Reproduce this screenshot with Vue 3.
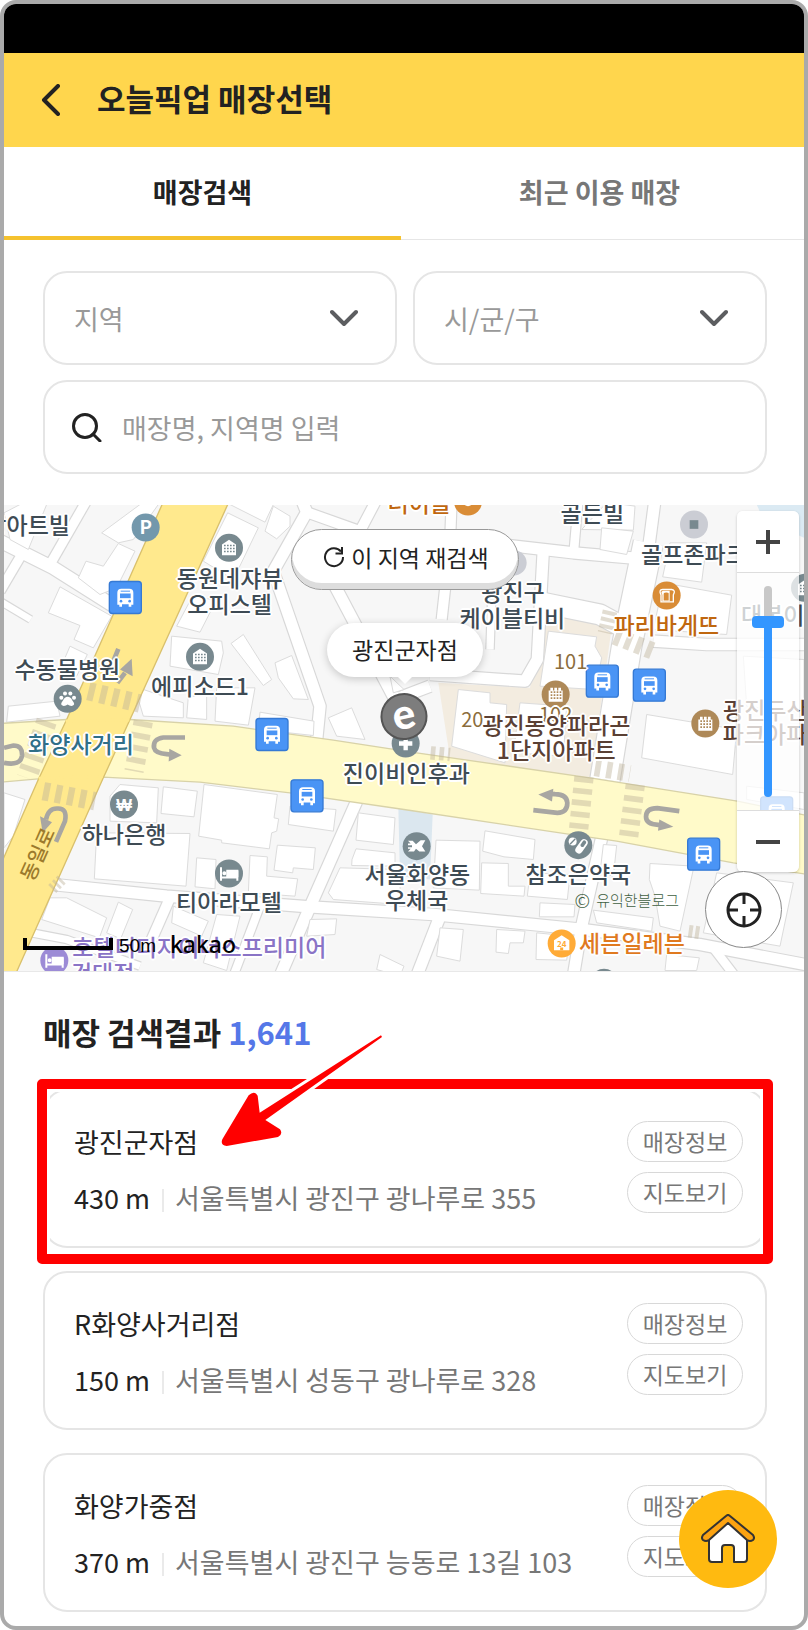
<template>
    <div class="phone">
        <div class="status-bar"></div>

        <header class="top-bar">
            <button type="button" class="back" aria-label="뒤로">
                <svg viewBox="0 0 20 32" width="20" height="32">
                    <path d="M17 2 L3 16 L17 30" />
                </svg>
            </button>
            <h1>오늘픽업 매장선택</h1>
        </header>

        <nav class="tabs">
            <button
                v-for="tab in tabs"
                :key="tab"
                type="button"
                :class="{ active: tab === activeTab }"
                @click="activeTab = tab"
            >
                {{ tab }}
            </button>
        </nav>

        <form class="filters" @submit.prevent>
            <div class="select-box">
                <select v-model="region" aria-label="지역">
                    <option value="">지역</option>
                    <option value="seoul">서울특별시</option>
                </select>
                <svg class="chevron" viewBox="0 0 28 18" width="28" height="18">
                    <path d="M2 3 L14 15 L26 3" />
                </svg>
            </div>
            <div class="select-box">
                <select v-model="district" aria-label="시/군/구">
                    <option value="">시/군/구</option>
                    <option value="gwangjin">광진구</option>
                    <option value="seongdong">성동구</option>
                </select>
                <svg class="chevron" viewBox="0 0 28 18" width="28" height="18">
                    <path d="M2 3 L14 15 L26 3" />
                </svg>
            </div>
            <div class="search-box">
                <svg viewBox="0 0 30 30" width="30" height="30">
                    <circle cx="13" cy="14" r="11.5" />
                    <path d="M21 22 L28 29" />
                </svg>
                <input
                    v-model="keyword"
                    type="text"
                    placeholder="매장명, 지역명 입력"
                    aria-label="매장명, 지역명 입력"
                />
            </div>
        </form>

        <section class="map">
            <svg class="map-base" viewBox="12 15 2400 1401" preserveAspectRatio="xMidYMid slice">
                <rect x="12" y="15" width="2400" height="1401" fill="#f7f7f7" />
                <polygon points="2270,15 2412,15 2412,115 2290,60" fill="#dbeaf3" />
                <polygon points="1625,335 1835,385 1770,850 1350,775 1315,550 1590,565" fill="#f3ece0" />
                <polygon points="1195,925 1298,945 1290,1140 1200,1130" fill="#dbe7ef" />

                <polyline v-for="r in roads" :key="'e' + r.p" :points="r.p" :stroke-width="r.w + 7" class="road-edge" />
                <polyline v-for="r in roads" :key="r.p" :points="r.p" :stroke-width="r.w" class="road" />
                <polygon v-for="b in buildings" :key="b" :points="b" class="building" />

                <!-- 광나루로 -->
                <path
                    class="avenue light"
                    d="M0 672 L200 660 L390 660 L700 680 L1000 722 L1250 760 L1770 835 L2212 905 L2430 950
                       L2430 1126 L2200 1090 L1850 1025 L1700 1003 L1212 930 L870 880 L600 848 L310 833 L115 838 L0 848 Z"
                />
                <!-- 동일로 -->
                <path class="avenue" d="M493 0 L690 0 L390 660 L310 835 L44 1430 L0 1430 L0 1100 L115 840 L200 660 Z" />
                <path d="M197 664 L388 662 M116 836 L309 831" stroke="#ffe98d" stroke-width="8" />

                <g class="crosswalk">
                    <path d="M265 575 L420 612" stroke-width="55" stroke-dasharray="19 18" />
                    <path d="M130 875 L285 905" stroke-width="55" stroke-dasharray="19 18" />
                    <path d="M430 665 L402 815" stroke-width="58" stroke-dasharray="17 20" />
                    <path d="M140 665 L80 835" stroke-width="62" stroke-dasharray="16 20" />
                    <path d="M1752 832 L1736 988" stroke-width="58" stroke-dasharray="17 18" />
                    <path d="M1906 855 L1886 1010" stroke-width="58" stroke-dasharray="17 18" />
                    <path d="M1785 805 L1890 822" stroke-width="50" stroke-dasharray="17 18" />
                    <path d="M1845 410 L1960 455" stroke-width="52" stroke-dasharray="18 16" />
                    <path d="M1292 760 L1350 765" stroke-width="40" stroke-dasharray="14 12" />
                    <path d="M2066 1295 L2100 1300" stroke-width="38" stroke-dasharray="12 8" />
                    <path d="M1830 335 L1815 400" stroke-width="44" stroke-dasharray="12 9" />
                    <path d="M185 1140 L155 1170" stroke-width="34" stroke-dasharray="8 8" />
                </g>

                <g class="turn">
                    <path d="M1600 932 L1672 940 Q1702 940 1702 910 Q1700 884 1665 884 L1650 883" />
                    <polygon points="1615,885 1660,868 1656,906" />
                    <path d="M2038 935 L1972 926 Q1938 926 1938 952 Q1938 975 1975 976 L1980 977" />
                    <polygon points="2020,982 1978,960 1974,994" />
                    <path d="M555 714 L490 714 Q458 718 462 745 Q466 762 500 764 L510 765" />
                    <polygon points="545,767 508,748 506,786" />
                    <path d="M12 790 Q62 800 66 768 Q68 738 40 738 L12 745" />
                    <path d="M168 1027 L195 965 Q203 925 172 927 Q145 926 138 960" />
                    <polygon points="128,1000 120,950 156,968" />
                    <path d="M355 448 L340 485 M352 550 L375 520" />
                    <polygon points="395,478 398,530 360,510" />
                </g>

                <g v-for="b in busStops" :key="b.join()" :transform="`translate(${b[0]} ${b[1]})`">
                    <rect x="-48" y="-48" width="96" height="96" rx="9" fill="#4a94f5" stroke="#3579d4" stroke-width="4" />
                    <path
                        d="M-24 22 V-14 Q-24 -26 -12 -26 H12 Q24 -26 24 -14 V22 H18 V28 H10 V20 H-10 V28 H-18 V22 Z"
                        fill="#fff"
                    />
                    <rect x="-16" y="-12" width="32" height="14" fill="#4a94f5" />
                    <circle cx="-13" cy="11" r="4" fill="#4a94f5" />
                    <circle cx="13" cy="11" r="4" fill="#4a94f5" />
                    <path d="M-14 -19 H14" stroke="#4a94f5" stroke-width="3" />
                </g>

                <g v-for="p in pins" :key="p.x + '-' + p.y" :transform="`translate(${p.x} ${p.y})`">
                    <circle :r="p.r || 42" :fill="p.color" />
                    <g v-if="p.icon === 'building' || p.icon === 'apart'">
                        <path v-if="p.icon === 'building'" d="M-21 22 V-10 L0 -24 L21 -10 V22 Z" fill="#fff" />
                        <path v-else d="M-21 22 V-12 H-16 V-20 H-8 V-12 H-4 V-20 H4 V-12 H8 V-20 H16 V-12 H21 V22 Z" fill="#fff" />
                        <path
                            d="M-15 -7 H17 M-15 2 H17 M-15 11 H17"
                            :stroke="p.color"
                            stroke-width="5"
                            stroke-dasharray="5 4"
                        />
                    </g>
                    <g v-else-if="p.icon === 'paw'" fill="#fff">
                        <path d="M0 -6 Q9 -6 14 5 Q25 18 14 21 Q6 22 0 17 Q-6 22 -14 21 Q-25 18 -14 5 Q-9 -6 0 -6 Z" />
                        <circle cx="-19" cy="-3" r="6" />
                        <circle cx="-8" cy="-16" r="6" />
                        <circle cx="8" cy="-16" r="6" />
                        <circle cx="19" cy="-3" r="6" />
                    </g>
                    <g v-else-if="p.icon === 'bed'" fill="none" stroke="#fff" stroke-width="6">
                        <path d="M-24 -19 V22 M-24 12 H25 M25 22 V-8 H-5 V10" />
                        <path d="M-4 -6 H25 V8 H-4 Z" fill="#fff" />
                        <circle cx="-14" cy="-1" r="3" />
                    </g>
                    <path v-else-if="p.icon === 'plus'" d="M0 -20 V20 M-20 0 H20" stroke="#fff" stroke-width="13" />
                    <path
                        v-else-if="p.icon === 'mail'"
                        d="M-26 -16 H-12 L-2 -6 L12 -18 H26 L16 0 L26 16 H8 L-2 8 L-8 16 H-26 L-18 8 H-26 V3 H-14 V-3 H-26 V-8 H-18 Z"
                        fill="#fff"
                    />
                    <g v-else-if="p.icon === 'pill'">
                        <circle cx="-17" cy="-11" r="12" fill="#fff" />
                        <path d="M-25 -3 L-9 -19" :stroke="p.color" stroke-width="4" />
                        <path d="M2 14 L17 -7" stroke="#fff" stroke-width="22" stroke-linecap="round" />
                        <path d="M12 0 L18 -9" :stroke="p.color" stroke-width="11" stroke-linecap="round" />
                    </g>
                    <rect v-else-if="p.icon === 'square'" x="-13" y="-13" width="26" height="26" fill="#78898f" />
                    <g v-else-if="p.icon === 'bread'">
                        <path
                            d="M-17 19 V-2 Q-25 -17 -12 -18 H15 Q28 -16 20 -2 V19 Z"
                            fill="none"
                            stroke="#fff"
                            stroke-width="4"
                        />
                        <path d="M9 17 V-14 H-10 Q-20 -12 -13 -2 V17 Z" fill="#fff" />
                        <path d="M-9 15 V-2 Q-10 -9 -2 -9 Q8 -10 6 -2 V15 Z" :fill="p.color" />
                    </g>
                    <g v-else-if="p.icon === 'store'">
                        <path d="M-23 20 V-10 L0 -25 L23 -10 V20 Z" fill="#fff" />
                        <path d="M0 20 V12" :stroke="p.color" stroke-width="9" />
                        <text y="10" class="pin-text" font-size="24" :fill="p.color">24</text>
                    </g>
                    <path v-else-if="p.icon === 'cup'" d="M-18 -12 H18 Q16 14 0 14 Q-16 14 -18 -12 Z" fill="#fff" />
                    <text v-else-if="p.icon === '₩'" y="18" class="pin-text won" font-size="50" fill="#fff">₩</text>
                    <text v-else-if="p.icon" y="20" class="pin-text" font-size="56" fill="#fff">{{ p.icon }}</text>
                </g>
            </svg>

            <span
                v-for="l in labels"
                :key="l.text"
                class="label"
                :class="l.kind"
                :style="{ left: (l.x - 12) / 24 + '%', top: (l.y - 15) / 14.01 + '%' }"
                >{{ l.text }}</span
            >

            <div class="scale"><i></i><span>50m</span><b>kakao</b></div>
            <span class="watermark"><i>©</i>유익한블로그</span>

            <button type="button" class="research">
                <svg viewBox="0 0 22 22" width="22" height="22">
                    <path d="M18 5.500 A9 9 0 1 0 20 11" />
                    <path d="M19 1 V7.500 H12.500" />
                </svg>
                이 지역 재검색
            </button>

            <div class="marker-tip">광진군자점</div>
            <div class="marker">e</div>

            <div class="zoom">
                <button type="button" aria-label="확대">
                    <svg viewBox="0 0 24 24" width="24" height="24"><path d="M12 0 V24 M0 12 H24" /></svg>
                </button>
                <input v-model="zoom" type="range" min="0" max="100" aria-label="지도 확대 수준" />
                <button type="button" aria-label="축소">
                    <svg viewBox="0 0 24 24" width="24" height="24"><path d="M0 12 H24" /></svg>
                </button>
            </div>

            <button type="button" class="locate" aria-label="현재 위치">
                <svg viewBox="0 0 36 36" width="36" height="36">
                    <circle cx="18" cy="18" r="16" />
                    <path d="M18 2 V12 M18 24 V34 M2 18 H12 M24 18 H34" />
                </svg>
            </button>
        </section>

        <section class="results">
            <h2>매장 검색결과 <em>1,641</em></h2>
            <ul>
                <li v-for="(store, i) in stores" :key="store.name">
                    <div class="info">
                        <strong>{{ store.name }}</strong>
                        <p>
                            <span class="distance">{{ store.distance }}</span>
                            <span>{{ store.address }}</span>
                        </p>
                    </div>
                    <div class="actions">
                        <button type="button">매장정보</button>
                        <button type="button">지도보기</button>
                    </div>
                    <template v-if="i === 0">
                        <div class="highlight"></div>
                        <svg class="arrow" viewBox="650 150 510 360" width="170" height="120">
                            <path class="halo" :d="arrowPath" />
                            <path :d="arrowPath" />
                        </svg>
                    </template>
                </li>
            </ul>
        </section>

        <a href="#" class="home" aria-label="홈">
            <svg viewBox="0 0 54 50" width="54" height="50">
                <path
                    d="M8 22 L27 6 L46 22 V45 Q46 48 43 48 H33 V34 Q33 31 30 31 H24 Q21 31 21 34 V48 H11 Q8 48 8 45 Z"
                    fill="#fff"
                />
                <path
                    d="M25 2 Q27 0 29 2 L52 21 Q54 24 52 26 Q49 28 46 26 L27 9 L8 26 Q5 28 2 26 Q0 24 2 21 Z"
                    fill="#fca311"
                />
            </svg>
        </a>
    </div>
</template>

<script setup>
import { ref } from 'vue'

const tabs = ['매장검색', '최근 이용 매장']
const activeTab = ref('매장검색')
const region = ref('')
const district = ref('')
const keyword = ref('')
const zoom = ref(85)

const stores = [
    { name: '광진군자점', distance: '430 m', address: '서울특별시 광진구 광나루로 355' },
    { name: 'R화양사거리점', distance: '150 m', address: '서울특별시 성동구 광나루로 328' },
    { name: '화양가중점', distance: '370 m', address: '서울특별시 광진구 능동로 13길 103' }
]

const arrowPath =
    'M669 478 L748 346 Q765 330 775 347 L781 398 L1145 166 L1148 171 L798 420 L842 448 Q852 462 836 471 L682 498 Q662 496 669 478 Z'

// 지도 좌표는 2400 x 1401 기준
const roads = [
    { p: '0,125 160,205 350,325', w: 38 },
    { p: '150,195 262,0', w: 28 },
    { p: '65,165 0,275', w: 28 },
    { p: '0,305 92,360', w: 20 },
    { p: '905,0 920,38 820,215 960,620 950,720', w: 34 },
    { p: '920,38 1080,95 1130,0', w: 30 },
    { p: '1000,250 1185,600 1290,560', w: 34 },
    { p: '1355,0 1350,135 1325,360', w: 30 },
    { p: '1300,120 1500,135 1720,160 1950,180', w: 34 },
    { p: '1630,150 1612,480 1575,545 1290,525', w: 34 },
    { p: '1475,300 1470,450', w: 22 },
    { p: '1630,310 1800,345 1900,400', w: 60 },
    { p: '1945,130 1880,440 1815,840', w: 88 },
    { p: '1735,0 1722,150', w: 26 },
    { p: '1965,0 1940,190', w: 34 },
    { p: '1960,425 2120,435 2430,435', w: 34 },
    { p: '160,1155 500,1190 930,1222 1300,1245 1750,1290 2100,1335 2430,1398', w: 34 },
    { p: '1070,905 930,1222 840,1430', w: 34 },
    { p: '510,1195 455,1320', w: 30 },
    { p: '780,1220 700,1430', w: 24 },
    { p: '1805,1015 1745,1280 1720,1430', w: 34 },
    { p: '1320,1250 1250,1430', w: 34 },
    { p: '2140,1345 2205,1430', w: 26 },
    { p: '95,1300 200,1320 420,1400', w: 22 }
]

const buildings = [
    '420,15 475,15 400,120 355,130 305,100',
    '355,132 405,155 350,265 300,285 235,235 258,185 310,200',
    '12,40 60,15 140,15 85,150 30,120',
    '180,262 335,350 280,445 222,420 240,378 145,340',
    '210,440 262,465 230,530 180,510',
    '683,40 775,85 700,240 610,185',
    '690,15 820,15 795,68',
    '820,20 870,50 870,80 830,118 795,95',
    '515,410 665,425 670,460 655,525 510,500',
    '575,295 650,300 600,398 530,380',
    '730,405 815,540 790,558 693,432',
    '825,490 875,468 925,600 880,598 835,535',
    '430,570 550,610 550,655 430,650 415,600',
    '565,590 620,590 620,660 560,655',
    '650,565 765,565 745,677 645,665',
    '780,638 942,665 940,708 775,690',
    '985,655 1055,625 1095,720 1010,710',
    '1170,530 1212,570 1180,580',
    '25,620 170,605 180,650 20,668',
    '12,880 75,900 40,1010 12,1045',
    '360,855 475,865 470,970 330,965 330,890',
    '490,862 592,875 582,952 483,942',
    '612,855 832,885 822,955 836,958 830,995 815,1000 808,1048 665,1030 665,1022 596,1010',
    '870,920 1008,930 1000,995 865,975',
    '290,1000 570,1002 558,1160 283,1138',
    '590,1075 648,1080 645,1168 585,1162',
    '750,1068 802,1072 800,1130 893,1138 885,1190 745,1180',
    '832,1037 946,1045 940,1110 880,1105 878,1120 822,1112',
    '1075,940 1185,955 1180,1035 1068,1022',
    '1068,1048 1185,1060 1185,1100 1055,1098 1056,1080',
    '1020,1105 1200,1110 1200,1215 1000,1200 985,1180',
    '150,1195 200,1195 320,1255 298,1315 125,1260',
    '355,1208 398,1230 362,1318 320,1300',
    '520,1220 625,1265 605,1310 515,1270',
    '650,1245 720,1250 680,1413 610,1390',
    '930,1260 1010,1258 1005,1305 920,1310',
    '1140,1365 1212,1400 1200,1430 1130,1410',
    '1308,1022 1440,1025 1438,1172 1300,1165',
    '1455,994 1605,1020 1600,1080 1512,1072 1448,1055',
    '1445,1090 1525,1092 1525,1160 1575,1160 1572,1190 1442,1182',
    '1590,1120 1710,1125 1702,1200 1582,1190',
    '1620,1210 1725,1215 1722,1252 1618,1252',
    '1810,1035 1850,1038 1840,1130 1800,1120',
    '1950,1092 2082,1100 2040,1295 1980,1280 1965,1190 1948,1140',
    '1780,1232 1960,1255 1955,1295 1790,1270',
    '1320,1285 1390,1290 1380,1385 1310,1370',
    '1490,1290 1575,1295 1570,1330 1530,1330 1525,1362 1488,1358',
    '1610,1300 1710,1310 1700,1382 1608,1380',
    '2150,1120 2380,1150 2340,1340 2110,1300',
    '2000,1365 2098,1375 2090,1413 1995,1413',
    '1645,395 1790,412 1785,440 1805,475 1785,570 1620,560',
    '1375,570 1470,580 1470,610 1520,615 1515,790 1355,740',
    '1560,610 1700,620 1690,770 1540,760',
    '1815,15 1870,15 1905,20 1900,92 1745,90',
    '1805,85 1900,95 1880,165 1800,150',
    '2010,130 2120,130 2105,248 1988,232',
    '1990,250 2195,287 2180,405 1960,390',
    '1940,645 2210,690 2198,825 1925,775',
    '2230,470 2412,480 2412,640 2240,620',
    '2240,860 2412,880 2412,930 2240,900'
]

const busStops = [
    [376, 294],
    [816, 705],
    [921, 889],
    [1807, 545],
    [1948, 557],
    [2111, 1064],
    [2330, 940]
]

const pins = [
    { x: 437, y: 84, color: '#7398ac', icon: 'P' },
    { x: 687, y: 145, color: '#78898f', icon: 'building' },
    { x: 600, y: 472, color: '#78898f', icon: 'building' },
    { x: 2415, y: 265, color: '#78898f', icon: 'building' },
    { x: 203, y: 598, color: '#78898f', icon: 'paw' },
    { x: 372, y: 915, color: '#78898f', icon: '₩' },
    { x: 687, y: 1122, color: '#78898f', icon: 'bed' },
    { x: 1217, y: 732, color: '#78898f', icon: 'plus' },
    { x: 1250, y: 1040, color: '#78898f', icon: 'mail' },
    { x: 1735, y: 1037, color: '#78898f', icon: 'pill' },
    { x: 1812, y: 1450, color: '#78898f' },
    { x: 2082, y: 75, color: '#cbcdd4', icon: 'square' },
    { x: 1542, y: 190, r: 38, color: '#cbcdd4' },
    { x: 2000, y: 288, color: '#d98c36', icon: 'bread' },
    { x: 1404, y: 6, color: '#d98c36', icon: 'cup' },
    { x: 1667, y: 585, color: '#ae8958', icon: 'apart' },
    { x: 2116, y: 672, color: '#ae8958', icon: 'apart' },
    { x: 163, y: 1383, color: '#9c8bd6', icon: 'bed' },
    { x: 1685, y: 1332, color: '#ffab37', icon: 'store' }
]

const labels = [
    { text: '상아트빌', x: 83, y: 78 },
    { text: '동원데쟈뷰', x: 689, y: 237 },
    { text: '오피스텔', x: 689, y: 315 },
    { text: '수동물병원', x: 202, y: 512 },
    { text: '에피소드1', x: 600, y: 563 },
    { text: '화양사거리', x: 243, y: 737, kind: 'crossing' },
    { text: '동일로', x: 110, y: 1063, kind: 'street' },
    { text: '하나은행', x: 372, y: 1007 },
    { text: '티아라모텔', x: 687, y: 1213 },
    { text: '진이비인후과', x: 1219, y: 823 },
    { text: '서울화양동', x: 1252, y: 1128 },
    { text: '우체국', x: 1250, y: 1206 },
    { text: '호텔더디자이너스프리미어', x: 598, y: 1348, kind: 'hotel' },
    { text: '건대점', x: 308, y: 1424, kind: 'hotel' },
    { text: '세븐일레븐', x: 1896, y: 1335, kind: 'mart' },
    { text: '참조은약국', x: 1735, y: 1126 },
    { text: '광진구', x: 1539, y: 280 },
    { text: '케이블티비', x: 1537, y: 357 },
    { text: '골든빌', x: 1777, y: 42 },
    { text: '골프존파크', x: 2082, y: 165 },
    { text: '더이블', x: 1258, y: 12, kind: 'food' },
    { text: '파리바게뜨', x: 1999, y: 378, kind: 'food' },
    { text: '대복이네', x: 2350, y: 348 },
    { text: '101', x: 1712, y: 490, kind: 'number' },
    { text: '102', x: 1667, y: 648, kind: 'number' },
    { text: '20', x: 1417, y: 665, kind: 'number' },
    { text: '광진동양파라곤', x: 1669, y: 678, kind: 'apart' },
    { text: '1단지아파트', x: 1669, y: 755, kind: 'apart' },
    { text: '광진두산', x: 2296, y: 633, kind: 'apart' },
    { text: '파크아파트', x: 2327, y: 705, kind: 'apart' }
]
</script>

<style>
body {
    margin: 0;
    background: #fff;
}
</style>

<style scoped>
* {
    box-sizing: border-box;
}
.phone {
    position: relative;
    overflow: hidden;
    border: 4px solid #aaa;
    border-radius: 16px;
    background: #fff;
    color: #222;
    font-family: 'Noto Sans CJK KR', 'Noto Sans', sans-serif;
}
button {
    padding: 0;
    border: 0;
    background: none;
    color: inherit;
    font: inherit;
    cursor: pointer;
}
svg {
    display: block;
    flex: none;
}

.status-bar {
    height: 49px;
    background: #000;
}
.top-bar {
    display: flex;
    align-items: center;
    gap: 36px;
    height: 94px;
    padding: 0 37px;
    background: #ffd64d;
}
.back path {
    fill: none;
    stroke: #222;
    stroke-width: 4;
    stroke-linecap: round;
    stroke-linejoin: round;
}
h1,
h2 {
    margin: 0;
    font-size: 31px;
    font-weight: 700;
    line-height: 46px;
}
h1 {
    padding-bottom: 5px;
}

.tabs {
    display: flex;
    height: 93px;
}
.tabs button {
    flex: 1;
    padding: 0 6px 4px 0;
    border-bottom: 1px solid #e6e6e6;
    color: #777;
    font-size: 27px;
    font-weight: 700;
}
.tabs .active {
    padding: 0 0 1px;
    border-bottom: 4px solid #f5c22e;
    color: #222;
}

.filters {
    display: grid;
    grid-template-columns: 1fr 1fr;
    gap: 15px 16px;
    padding: 31px 37px 31px 39px;
}
.select-box,
.search-box {
    position: relative;
    display: flex;
    align-items: center;
    height: 94px;
    border: 2px solid #e5e5e5;
    border-radius: 24px;
}
select,
input[type='text'] {
    width: 100%;
    height: 100%;
    border: 0;
    outline: 0;
    background: none;
    color: #999;
    font: inherit;
    font-size: 27px;
}
select {
    appearance: none;
    padding: 0 29px;
}
.chevron {
    position: absolute;
    right: 37px;
    pointer-events: none;
}
.chevron path {
    fill: none;
    stroke: #5c5d60;
    stroke-width: 4;
    stroke-linecap: round;
    stroke-linejoin: round;
}
.search-box {
    grid-column: 1 / -1;
    gap: 20px;
    padding: 0 27px;
}
.search-box input {
    padding: 0;
}
.search-box input::placeholder {
    color: #999;
    opacity: 1;
}
.search-box svg {
    fill: none;
    stroke: #222;
    stroke-width: 3;
    stroke-linecap: round;
}

.map {
    position: relative;
    overflow: hidden;
    aspect-ratio: 800 / 467;
    border-bottom: 1px solid #e8e8e8;
}
.map-base {
    width: 100%;
    height: 100%;
}
.road-edge {
    fill: none;
    stroke: #d8d8d8;
    stroke-linejoin: round;
}
.road {
    fill: none;
    stroke: #fff;
    stroke-linejoin: round;
}
.building {
    fill: #fff;
    stroke: #dcdcdc;
    stroke-width: 3;
}
.avenue {
    fill: #ffe98d;
    stroke: #d9c06c;
    stroke-width: 4;
}
.avenue.light {
    fill: #fffac9;
    stroke: #d8d2a8;
}
.crosswalk {
    fill: none;
    stroke: rgba(190, 180, 155, 0.45);
}
.turn {
    fill: #a8a6a2;
}
.turn path {
    fill: none;
    stroke: #a8a6a2;
    stroke-width: 14;
}
.pin-text {
    font-weight: 700;
    text-anchor: middle;
}
.pin-text.won {
    font-family: 'Liberation Sans', sans-serif;
}
.label {
    position: absolute;
    color: #3e4b54;
    font-size: 23px;
    font-weight: 500;
    line-height: 26px;
    white-space: nowrap;
    text-shadow:
        2px 0 #fff,
        -2px 0 #fff,
        0 2px #fff,
        0 -2px #fff,
        1px 1px #fff,
        -1px -1px #fff,
        1px -1px #fff,
        -1px 1px #fff;
    transform: translate(-50%, -56%);
}
.label.crossing {
    color: #2f6f88;
}
.label.street {
    color: #9c7a2c;
    font-size: 20px;
    text-shadow: none;
    transform: translate(-50%, -50%) rotate(-66deg);
}
.label.hotel {
    color: #8a74c6;
}
.label.mart {
    color: #e07a1f;
}
.label.food {
    color: #c0670f;
}
.label.apart {
    color: #5a4034;
}
.label.number {
    color: #8b6d3c;
    font-size: 20px;
    font-weight: 400;
}

.scale {
    position: absolute;
    left: 19px;
    bottom: 10px;
    display: flex;
    align-items: center;
    color: #000;
    line-height: 30px;
}
.scale i {
    width: 90px;
    height: 12px;
    border: 4px solid #000;
    border-top: 0;
}
.scale span {
    margin: 5px 14px 0 6px;
    font-family: 'Liberation Sans', sans-serif;
    font-size: 19px;
}
.scale b {
    font-family: 'Noto Sans', sans-serif;
    font-size: 23px;
    font-weight: 500;
}
.watermark {
    position: absolute;
    right: 125px;
    bottom: 60px;
    display: flex;
    align-items: center;
    gap: 6px;
    color: #3f5f42;
    font-size: 15px;
    font-weight: 300;
    line-height: 22px;
}
.watermark i {
    font-size: 19px;
    font-style: normal;
}
.research {
    position: absolute;
    top: 24px;
    left: 50%;
    display: flex;
    align-items: center;
    justify-content: center;
    gap: 6px;
    width: 228px;
    height: 61px;
    margin-left: 1px;
    padding: 0 0 6px 2px;
    border: 1px solid #999;
    border-radius: 31px;
    background: #fff;
    box-shadow: inset 0 -6px #ddd;
    font-size: 23px;
    transform: translateX(-50%);
}
.research svg {
    fill: none;
    stroke: #222;
    stroke-width: 2;
}
.marker-tip {
    position: absolute;
    top: 118px;
    left: 50%;
    width: 156px;
    margin-left: 1px;
    border-radius: 27px;
    background: #fff;
    box-shadow: 0 2px 8px rgba(0, 0, 0, 0.2);
    font-size: 23px;
    line-height: 52px;
    padding-bottom: 2px;
    text-align: center;
    transform: translateX(-50%);
}
.marker-tip::after {
    content: '';
    position: absolute;
    top: 54px;
    left: 50%;
    border: 7px solid transparent;
    border-top-color: #fff;
    transform: translateX(-50%);
}
.marker {
    position: absolute;
    top: 188px;
    left: 50%;
    width: 47px;
    height: 47px;
    border: 2px solid #555;
    border-radius: 50%;
    background: #7d7d7d;
    color: #fff;
    font-family: 'Lato', sans-serif;
    font-size: 42px;
    font-weight: 900;
    line-height: 36px;
    text-align: center;
    transform: translateX(-50%) rotate(-12deg);
}

.zoom {
    position: absolute;
    top: 6px;
    right: 5px;
    display: flex;
    flex-direction: column;
    align-items: center;
    width: 62px;
    border-radius: 6px;
    background: rgba(255, 255, 255, 0.75);
    box-shadow: 0 1px 3px rgba(0, 0, 0, 0.2);
}
.zoom button {
    display: flex;
    align-items: center;
    justify-content: center;
    width: 100%;
    height: 61px;
    border-radius: 6px 6px 0 0;
    background: #fff;
    box-shadow: 0 1px #ddd;
}
.zoom button:last-child {
    border-radius: 0 0 6px 6px;
    box-shadow: 0 -1px #ddd;
}
.zoom path {
    stroke: #444;
    stroke-width: 4;
}
.zoom input {
    width: 32px;
    height: 211px;
    margin: 14px 0;
    appearance: none;
    background: none;
    writing-mode: vertical-lr;
    direction: rtl;
}
.zoom input::-webkit-slider-runnable-track {
    width: 8px;
    border-radius: 4px;
    background: linear-gradient(#c8c8c8 17%, #3396ff 17%);
}
.zoom input::-webkit-slider-thumb {
    width: 32px;
    height: 12px;
    margin-left: -12px;
    appearance: none;
    border-radius: 4px;
    background: #3396ff;
}
.locate {
    position: absolute;
    right: 22px;
    bottom: 23px;
    display: flex;
    align-items: center;
    justify-content: center;
    width: 77px;
    height: 77px;
    border: 1px solid #888;
    border-radius: 50%;
    background: #fff;
}
.locate svg {
    fill: none;
    stroke: #222;
    stroke-width: 3;
}

.results {
    padding: 37px 37px 14px 39px;
}
.results em {
    color: #5577e8;
    font-style: normal;
}
ul {
    display: flex;
    flex-direction: column;
    gap: 23px;
    margin: 34px 0 0;
    padding: 0;
    list-style: none;
}
li {
    position: relative;
    display: flex;
    justify-content: space-between;
    padding: 30px 22px 27px 29px;
    border: 2px solid #e5e5e5;
    border-radius: 24px;
}
.info {
    display: flex;
    flex-direction: column;
    gap: 14px;
    font-size: 27px;
    line-height: 42px;
}
.info strong {
    font-weight: 400;
}
.info p {
    display: flex;
    align-items: center;
    margin: 0;
    color: #777;
}
.distance {
    color: #222;
}
.distance::after {
    content: '';
    display: inline-block;
    width: 2px;
    height: 23px;
    margin: 0 11px 0 12px;
    background: #eaeaea;
    vertical-align: -3px;
}
.actions {
    display: flex;
    flex-direction: column;
    gap: 10px;
}
.actions button {
    width: 116px;
    height: 41px;
    padding-bottom: 2px;
    border: 1px solid #d8d8d8;
    border-radius: 21px;
    color: #777;
    font-size: 23px;
    line-height: 36px;
}
.highlight {
    position: absolute;
    inset: -12px -8px -18px;
    border: 10px solid #f00;
    border-radius: 5px;
    box-shadow: inset 0 0 0 3px #fff;
    pointer-events: none;
}
.arrow {
    position: absolute;
    top: -61px;
    left: 171px;
    overflow: visible;
    fill: #f00;
    pointer-events: none;
}
.arrow .halo {
    stroke: #fff;
    stroke-width: 18;
    stroke-linejoin: round;
}

.home {
    position: absolute;
    right: 27px;
    bottom: 38px;
    display: flex;
    align-items: center;
    justify-content: center;
    width: 98px;
    height: 98px;
    border-radius: 50%;
    background: #ffba10;
}
.home path {
    stroke: #333;
    stroke-width: 2;
    stroke-linejoin: round;
}
</style>
